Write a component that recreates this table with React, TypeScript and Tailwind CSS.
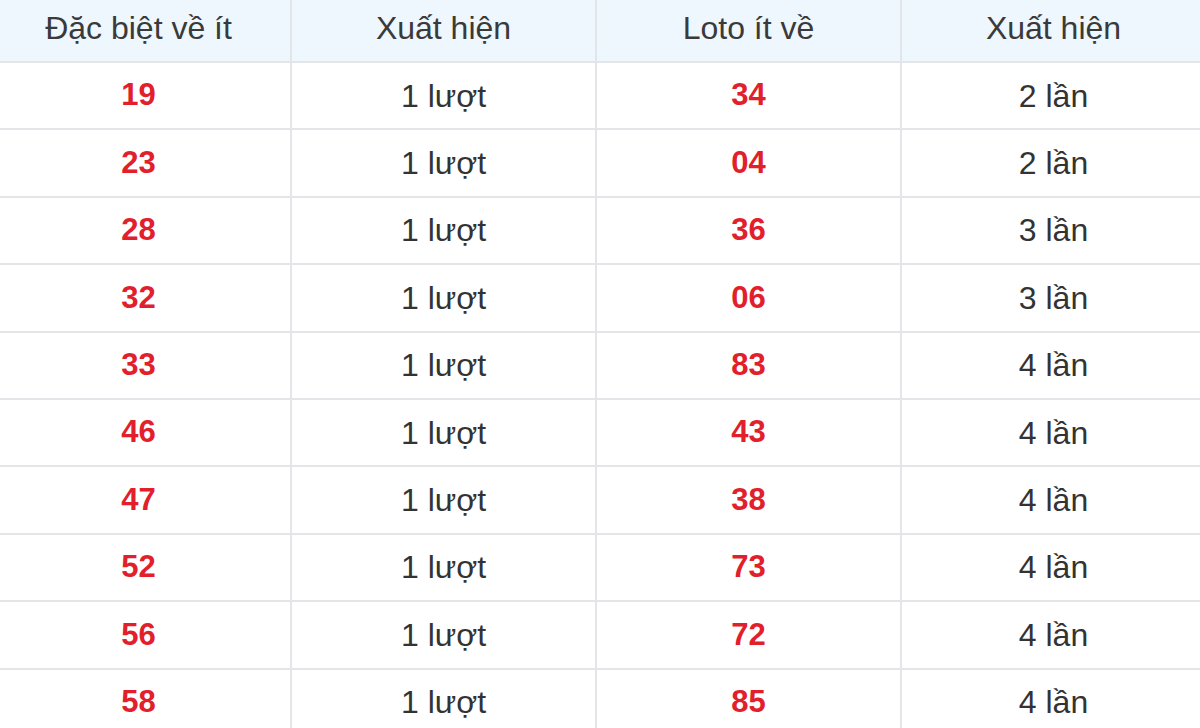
const rows: [string, string, string, string][] = [
  ["19", "1 lượt", "34", "2 lần"],
  ["23", "1 lượt", "04", "2 lần"],
  ["28", "1 lượt", "36", "3 lần"],
  ["32", "1 lượt", "06", "3 lần"],
  ["33", "1 lượt", "83", "4 lần"],
  ["46", "1 lượt", "43", "4 lần"],
  ["47", "1 lượt", "38", "4 lần"],
  ["52", "1 lượt", "73", "4 lần"],
  ["56", "1 lượt", "72", "4 lần"],
  ["58", "1 lượt", "85", "4 lần"],
];

const headers = ["Đặc biệt về ít", "Xuất hiện", "Loto ít về", "Xuất hiện"];

export default function App() {
  return (
    <div
      className="w-[1200px] h-[728px] overflow-hidden bg-white text-[32px] text-[#333]"
      style={{ fontFamily: '"Liberation Sans", Arial, sans-serif' }}
    >
      <table className="-mt-[2px] -ml-[15px] w-[1222px] table-fixed border-collapse">
        <thead>
          <tr className="h-[63px] bg-[#eef6fe]">
            {headers.map((h, i) => (
              <th
                key={i}
                className="border-2 border-[#e3e5e8] pb-[5px] font-normal text-center align-middle leading-none text-[#3a3a3a]"
              >
                {h}
              </th>
            ))}
          </tr>
        </thead>
        <tbody>
          {rows.map((r, i) => (
            <tr key={i} className="h-[67.4px]">
              <td className="border-2 border-[#e3e5e8] text-center text-[31px] font-bold text-[#e2202c]">{r[0]}</td>
              <td className="border-2 border-[#e3e5e8] text-center">{r[1]}</td>
              <td className="border-2 border-[#e3e5e8] text-center text-[31px] font-bold text-[#e2202c]">{r[2]}</td>
              <td className="border-2 border-[#e3e5e8] text-center">{r[3]}</td>
            </tr>
          ))}
        </tbody>
      </table>
    </div>
  );
}
